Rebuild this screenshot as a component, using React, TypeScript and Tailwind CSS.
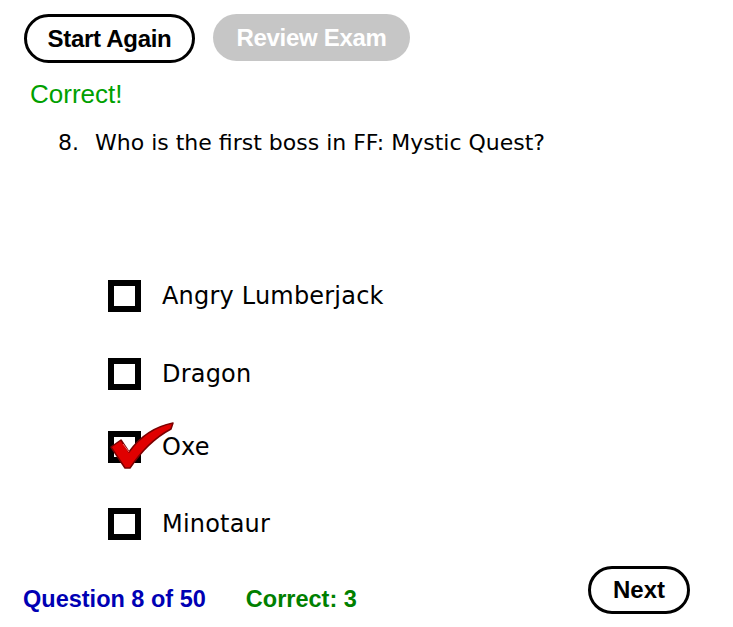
import React from 'react'

const options = [
  { label: 'Angry Lumberjack', checked: false, gap: 'mt-[124px]' },
  { label: 'Dragon', checked: false, gap: 'mt-[46px]' },
  { label: 'Oxe', checked: true, gap: 'mt-[41px]' },
  { label: 'Minotaur', checked: false, gap: 'mt-[45px]' },
]

function CheckMark() {
  return (
    <svg
      className="absolute left-[-4px] top-[-15px]"
      width="66"
      height="48"
      viewBox="0 0 66 48"
    >
      <path
        d="M1 25 L11 18 L19 30 C29 16 43 5 63 1 L61 7 C46 15 32 28 20 46 L15 46 Z"
        fill="#e00000"
        stroke="#7a0000"
        strokeWidth="1.5"
        strokeLinejoin="round"
      />
      <path d="M13 22 L19 30" stroke="#ff6a6a" strokeWidth="1" />
    </svg>
  )
}

function Option({ label, checked, gap }: { label: string; checked: boolean; gap: string }) {
  return (
    <div className={`flex h-[32px] items-center pl-[108px] ${gap}`}>
      <div className="relative h-[32px] w-[33px] border-[6px] border-black bg-white">
        {checked && <CheckMark />}
      </div>
      <span className="ml-[21px] font-['DejaVu_Sans',sans-serif] text-[24px] leading-[32px] tracking-[0.2px] text-black">
        {label}
      </span>
    </div>
  )
}

export default function App() {
  return (
    <div className="h-[627px] w-[733px] bg-white font-['Liberation_Sans',Arial,sans-serif]">
      <div className="flex gap-[18px] pl-[24px] pt-[14px]">
        <button className="flex h-[49px] w-[171px] items-center justify-center rounded-full border-[3px] border-black bg-white text-[24px] font-bold tracking-[-0.3px] text-black">
          Start Again
        </button>
        <button className="flex h-[47px] w-[197px] items-center justify-center rounded-full bg-[#c6c6c6] text-[24px] font-bold tracking-[-0.3px] text-white">
          Review Exam
        </button>
      </div>

      <div className="mt-[16px] pl-[30px] text-[26px] leading-[30px] text-[#00a000]">Correct!</div>

      <div className="mt-[21px] flex pl-[58px] font-['DejaVu_Sans',sans-serif] text-[22px] leading-[26px] text-black">
        <span className="w-[37px]">8.</span>
        <span>Who is the first boss in FF: Mystic Quest?</span>
      </div>

      {options.map((o) => (
        <Option key={o.label} label={o.label} checked={o.checked} gap={o.gap} />
      ))}

      <div className="mt-[26px] flex items-end pl-[23px] pr-[43px]">
        <span className="pb-[2px] text-[23.5px] font-bold leading-[26px] text-[#0000b4]">Question 8 of 50</span>
        <span className="ml-[40px] pb-[2px] text-[23.5px] font-bold leading-[26px] text-[#008000]">Correct: 3</span>
        <button className="ml-auto flex h-[48px] w-[102px] items-center justify-center rounded-full border-[3px] border-black bg-white text-[24px] font-bold text-black">
          Next
        </button>
      </div>
    </div>
  )
}
